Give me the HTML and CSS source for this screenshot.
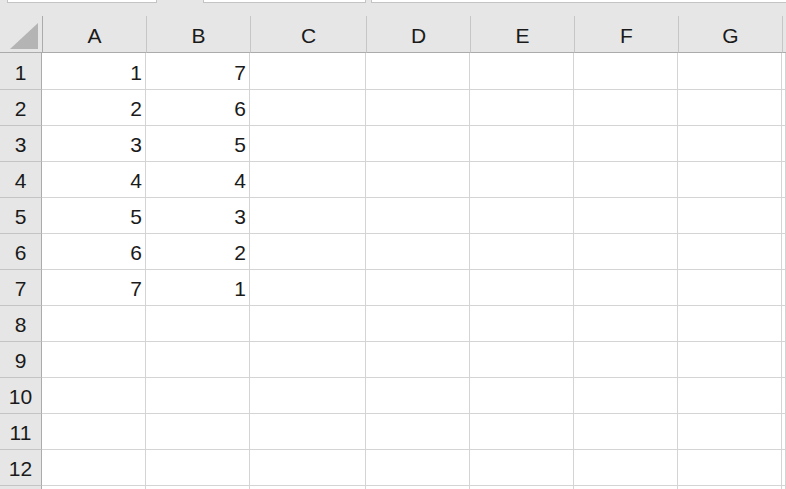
FILE: index.html
```html
<!DOCTYPE html>
<html>
<head>
<meta charset="utf-8">
<link rel="stylesheet" href="styles.css">
</head>
<body>
<div class="tabs">
  <div class="tab tab1"></div>
  <div class="tab tab2"></div>
  <div class="tab tab3"></div>
</div>
<div class="sheet">
  <div class="corner"><svg width="42" height="37" viewBox="0 0 42 37"><polygon points="10,33 38,33 38,7" fill="#b4b4b4"/></svg></div>
  <div class="ch">A</div><div class="ch">B</div><div class="ch">C</div><div class="ch">D</div><div class="ch">E</div><div class="ch">F</div><div class="ch">G</div><div class="ch last"></div>

  <div class="rh">1</div><div class="c">1</div><div class="c">7</div><div class="c"></div><div class="c"></div><div class="c"></div><div class="c"></div><div class="c"></div><div class="c"></div>
  <div class="rh">2</div><div class="c">2</div><div class="c">6</div><div class="c"></div><div class="c"></div><div class="c"></div><div class="c"></div><div class="c"></div><div class="c"></div>
  <div class="rh">3</div><div class="c">3</div><div class="c">5</div><div class="c"></div><div class="c"></div><div class="c"></div><div class="c"></div><div class="c"></div><div class="c"></div>
  <div class="rh">4</div><div class="c">4</div><div class="c">4</div><div class="c"></div><div class="c"></div><div class="c"></div><div class="c"></div><div class="c"></div><div class="c"></div>
  <div class="rh">5</div><div class="c">5</div><div class="c">3</div><div class="c"></div><div class="c"></div><div class="c"></div><div class="c"></div><div class="c"></div><div class="c"></div>
  <div class="rh">6</div><div class="c">6</div><div class="c">2</div><div class="c"></div><div class="c"></div><div class="c"></div><div class="c"></div><div class="c"></div><div class="c"></div>
  <div class="rh">7</div><div class="c">7</div><div class="c">1</div><div class="c"></div><div class="c"></div><div class="c"></div><div class="c"></div><div class="c"></div><div class="c"></div>
  <div class="rh">8</div><div class="c"></div><div class="c"></div><div class="c"></div><div class="c"></div><div class="c"></div><div class="c"></div><div class="c"></div><div class="c"></div>
  <div class="rh">9</div><div class="c"></div><div class="c"></div><div class="c"></div><div class="c"></div><div class="c"></div><div class="c"></div><div class="c"></div><div class="c"></div>
  <div class="rh">10</div><div class="c"></div><div class="c"></div><div class="c"></div><div class="c"></div><div class="c"></div><div class="c"></div><div class="c"></div><div class="c"></div>
  <div class="rh">11</div><div class="c"></div><div class="c"></div><div class="c"></div><div class="c"></div><div class="c"></div><div class="c"></div><div class="c"></div><div class="c"></div>
  <div class="rh">12</div><div class="c"></div><div class="c"></div><div class="c"></div><div class="c"></div><div class="c"></div><div class="c"></div><div class="c"></div><div class="c"></div>
  <div class="rh"></div><div class="c"></div><div class="c"></div><div class="c"></div><div class="c"></div><div class="c"></div><div class="c"></div><div class="c"></div><div class="c"></div>
</div>
</body>
</html>
```
FILE: styles.css
```css
html, body {
  margin: 0;
  padding: 0;
  background: #e6e6e6;
  overflow: hidden;
  font-family: "Liberation Sans", "Noto Sans CJK JP", sans-serif;
  color: #1a1a1a;
}
.tabs {
  display: flex;
  height: 16px;
  background: #e6e6e6;
}
.tab {
  height: 2px;
  background: #fff;
  border: 1px solid #c4c4c4;
  border-top: 0;
}
.tab1 { margin-left: 7px; width: 148px; }
.tab2 { margin-left: 46px; width: 161px; }
.tab3 { margin-left: 5px; flex: 1; border-right: 0; }

.sheet {
  display: grid;
  grid-template-columns: 42px 104px 104px 116px 104px 104px 104px 104px 1fr;
  grid-template-rows: 37px 37px repeat(12, 36px);
  background: #fff;
}
.corner {
  background: #e6e6e6;
  border-bottom: 1px solid #ababab;
  box-sizing: border-box;
  height: 37px;
}
.corner svg { display: block; }
.ch {
  background: #e6e6e6;
  border-left: 1px solid #c6c6c6;
  border-bottom: 1px solid #ababab;
  display: flex;
  align-items: center;
  justify-content: center;
  font-size: 21px;
  line-height: 1;
  padding-top: 2px;
}
.ch:nth-child(2) { border-left-color: #ababab; }
.rh {
  background: #e6e6e6;
  border-right: 1px solid #ababab;
  border-bottom: 1px solid #c4c4c4;
  display: flex;
  align-items: center;
  justify-content: center;
  font-size: 21px;
  line-height: 1;
  padding-top: 2px;
}
.c {
  border-right: 1px solid #d4d4d4;
  border-bottom: 1px solid #d4d4d4;
  display: flex;
  align-items: center;
  justify-content: flex-end;
  padding-right: 3px;
  padding-top: 2px;
  font-size: 21px;
  line-height: 1;
}
```
